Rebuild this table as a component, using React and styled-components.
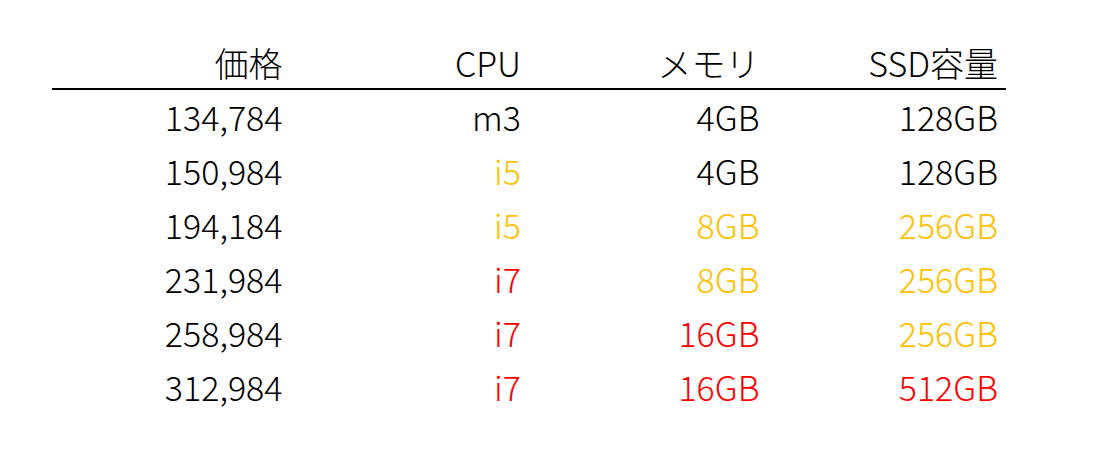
import React from "react";
import styled, { createGlobalStyle } from "styled-components";

const GlobalStyle = createGlobalStyle`
  body {
    margin: 0;
    background: #ffffff;
    font-family: "Noto Sans CJK JP", "Noto Sans", sans-serif;
  }
`;

const Page = styled.div`
  width: 1096px;
  height: 450px;
  padding: 38px 0 0 52px;
  box-sizing: border-box;
`;

const Table = styled.table`
  width: 954px;
  border-collapse: collapse;
  table-layout: fixed;
`;

const HeadCell = styled.th`
  font-weight: 300;
  font-size: 34px;
  line-height: 1;
  color: #000;
  text-align: right;
  padding: 0 8px 0 0;
  height: 50px;
  vertical-align: middle;
  border-bottom: 2px solid #000;
`;

const Cell = styled.td`
  font-weight: 300;
  font-size: 34px;
  line-height: 1;
  text-align: right;
  padding: 0 8px 0 0;
  height: 54px;
  vertical-align: middle;
  color: ${(p) =>
    p.$tone === "gold" ? "#ffc000" : p.$tone === "red" ? "#ff0000" : "#000"};
`;

const headers = ["価格", "CPU", "メモリ", "SSD容量"];

const rows = [
  [["134,784"], ["m3"], ["4GB"], ["128GB"]],
  [["150,984"], ["i5", "gold"], ["4GB"], ["128GB"]],
  [["194,184"], ["i5", "gold"], ["8GB", "gold"], ["256GB", "gold"]],
  [["231,984"], ["i7", "red"], ["8GB", "gold"], ["256GB", "gold"]],
  [["258,984"], ["i7", "red"], ["16GB", "red"], ["256GB", "gold"]],
  [["312,984"], ["i7", "red"], ["16GB", "red"], ["512GB", "red"]],
];

export default function App() {
  return (
    <>
      <GlobalStyle />
      <Page>
        <Table>
          <thead>
            <tr>
              {headers.map((h) => (
                <HeadCell key={h}>{h}</HeadCell>
              ))}
            </tr>
          </thead>
          <tbody>
            {rows.map((r, i) => (
              <tr key={i}>
                {r.map(([text, tone], j) => (
                  <Cell key={j} $tone={tone}>
                    {text}
                  </Cell>
                ))}
              </tr>
            ))}
          </tbody>
        </Table>
      </Page>
    </>
  );
}
